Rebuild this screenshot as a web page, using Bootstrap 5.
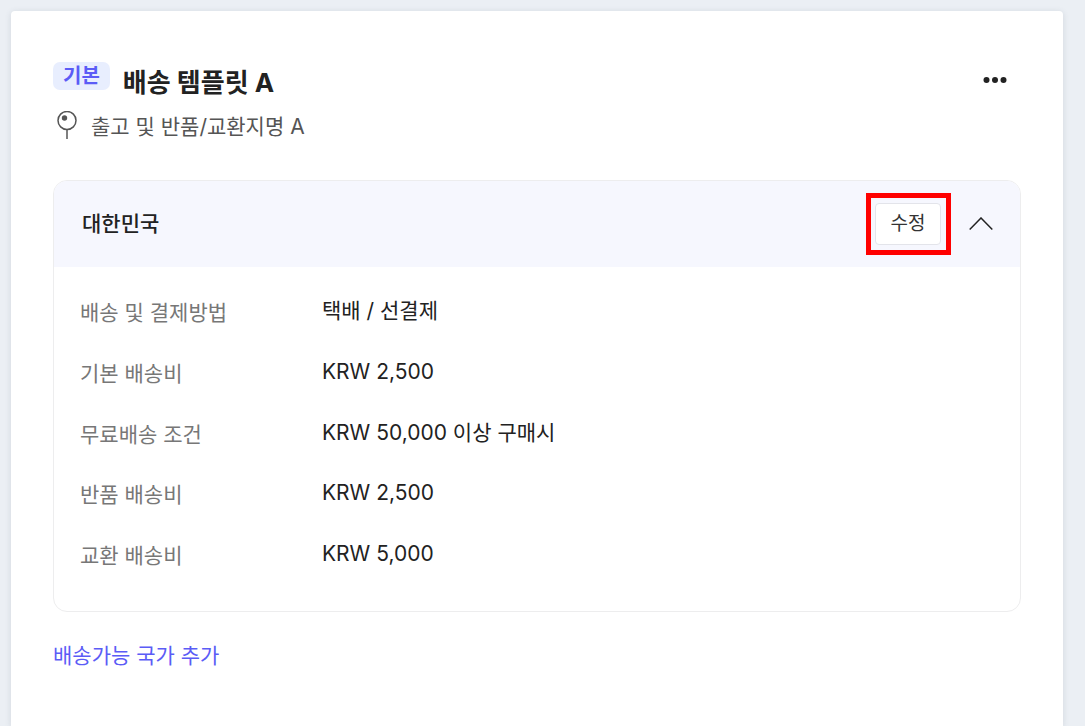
<!DOCTYPE html>
<html lang="ko">
<head>
<meta charset="utf-8">
<meta name="viewport" content="width=device-width, initial-scale=1">
<title>배송 템플릿</title>
<link href="https://cdn.jsdelivr.net/npm/bootstrap@5.3.0/dist/css/bootstrap.min.css" rel="stylesheet">
<style>
  body { background: #ebeff4; color: #222; font-family: Inter, "Noto Sans CJK KR", sans-serif; font-size: 21px; line-height: 32px; padding: 11px 22px 0 11px; }
  .panel { border-radius: 4px 4px 0 0; box-shadow: 0 1px 6px rgba(60, 70, 90, .14); padding: 51px 42px 40px; }
  .default-tag { background: #e8eefe; color: #5b5cf6; font-size: 20px; font-weight: 700; line-height: 28px; padding: 0 10px; border-radius: 7px; }
  .template-title { font-size: 26px; font-weight: 700; line-height: 42px; margin-left: 13px; }
  .place { color: #555; gap: 14px; padding-left: 4px; margin-top: 7px; }
  .more-btn { width: 52px; height: 36px; }
  .country { border: 1px solid #ededee; border-radius: 14px; margin-top: 37px; }
  .country-head { background: #f6f7fe; min-height: 86px; border-radius: 13px 13px 0 0; padding: 0 18px 0 28px; }
  .country-name { font-size: 21px; font-weight: 500; line-height: 32px; }
  .focus-frame { border: 5px solid #f00; padding: 5px 5px 5px 4px; }
  .edit-btn { width: 66px; height: 42px; font-size: 19px; line-height: 28px; border: 1px solid #e3e4ea; border-radius: 4px; background: #fff; color: #333; }
  .toggle-btn { width: 42px; height: 36px; margin-left: 9px; }
  .fees { min-height: 344px; padding: 28px 26px 39px; }
  .fees dt { width: 242px; color: #777; font-weight: 400; padding-top: 2px; }
  .fees dd { color: #222; }
  .add-link { color: #5b5cf6; margin-top: 28px; }
</style>
</head>
<body class="min-vh-100 d-flex flex-column">
<main class="panel bg-white flex-grow-1">
  <header>
    <div class="d-flex align-items-start">
      <span class="default-tag">기본</span>
      <h1 class="template-title mb-0">배송 템플릿 A</h1>
      <button type="button" class="more-btn btn border-0 p-0 ms-auto d-flex align-items-center justify-content-center" aria-label="더보기">
        <svg width="24" height="8" viewBox="0 0 24 8" fill="#222"><circle cx="3.500" cy="4" r="3"/><circle cx="12" cy="4" r="3"/><circle cx="20.500" cy="4" r="3"/></svg>
      </button>
    </div>
    <p class="place d-flex align-items-start mb-0">
      <svg width="20" height="30" viewBox="0 0 20 30" fill="none" stroke="#555" stroke-width="1.500" aria-hidden="true"><circle cx="10" cy="9.500" r="9"/><path d="M10 18.500V28"/><circle cx="7.500" cy="7" r="2.700" fill="#555" stroke="none"/></svg>
      <span>출고 및 반품/교환지명 A</span>
    </p>
  </header>

  <section class="country">
    <div class="country-head d-flex align-items-center">
      <h2 class="country-name mb-0 me-auto">대한민국</h2>
      <div class="focus-frame"><button type="button" class="edit-btn btn p-0 d-block">수정</button></div>
      <button type="button" class="toggle-btn btn border-0 p-0 d-flex align-items-center justify-content-center" aria-label="접기" aria-expanded="true">
        <svg width="24" height="14" viewBox="0 0 24 14" fill="none" stroke="#222" stroke-width="1.500"><path d="M.7 12.500 12 1 23.300 12.500"/></svg>
      </button>
    </div>
    <dl class="fees d-flex flex-column justify-content-between mb-0">
      <div class="d-flex"><dt>배송 및 결제방법</dt><dd class="mb-0">택배 / 선결제</dd></div>
      <div class="d-flex"><dt>기본 배송비</dt><dd class="mb-0">KRW 2,500</dd></div>
      <div class="d-flex"><dt>무료배송 조건</dt><dd class="mb-0">KRW 50,000 이상 구매시</dd></div>
      <div class="d-flex"><dt>반품 배송비</dt><dd class="mb-0">KRW 2,500</dd></div>
      <div class="d-flex"><dt>교환 배송비</dt><dd class="mb-0">KRW 5,000</dd></div>
    </dl>
  </section>

  <a href="#" class="add-link d-inline-block text-decoration-none">배송가능 국가 추가</a>
</main>
<script src="https://cdn.jsdelivr.net/npm/bootstrap@5.3.0/dist/js/bootstrap.bundle.min.js"></script>
</body>
</html>
